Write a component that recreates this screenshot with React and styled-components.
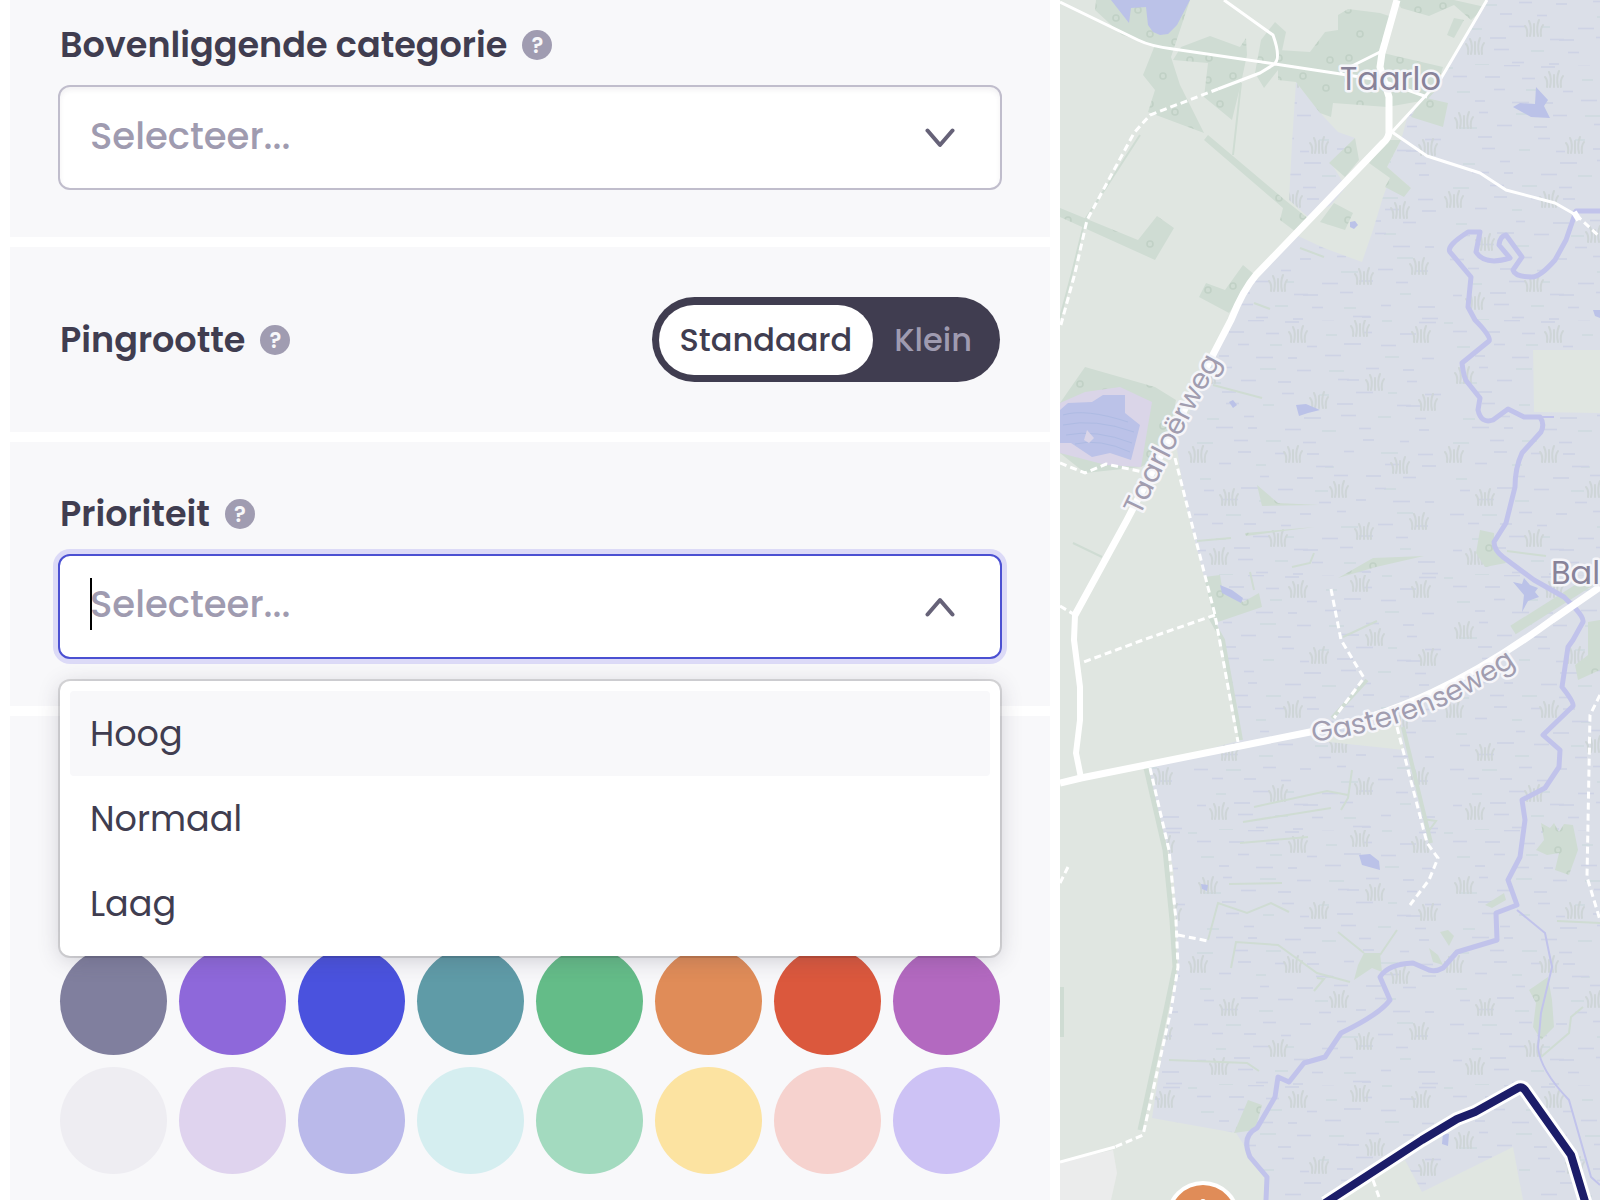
import React, { useState } from 'react';
import styled, { createGlobalStyle, css } from 'styled-components';

const darkColors = [
  ['Grijs', '#807f9e'],
  ['Paars', '#8e68da'],
  ['Blauw', '#4a52de'],
  ['Petrol', '#5f9ba7'],
  ['Groen', '#64bc88'],
  ['Oranje', '#e08c58'],
  ['Rood', '#db583d'],
  ['Magenta', '#b369c0'],
];

const lightColors = [
  ['Lichtgrijs', '#eeedf2'],
  ['Lichtpaars', '#dfd3ee'],
  ['Lichtblauw', '#bab9ea'],
  ['Lichtpetrol', '#d5eef0'],
  ['Lichtgroen', '#a3dabf'],
  ['Geel', '#fce3a1'],
  ['Roze', '#f6d2ce'],
  ['Lila', '#cdc2f5'],
];

const priorities = ['Hoog', 'Normaal', 'Laag'];

const Chevron = ({ up }) => (
  <ChevronSvg viewBox="0 0 30 20" aria-hidden="true">
    <path d={up ? 'M2.5 17.5 15 3 27.5 17.5' : 'M2.5 2.5 15 17 27.5 2.5'} />
  </ChevronSvg>
);

const Help = ({ topic }) => (
  <HelpButton type="button" aria-label={`Uitleg ${topic}`}>?</HelpButton>
);

const ParentCategory = () => (
  <Section $top={23}>
    <LabelRow>
      <Label htmlFor="parent">Bovenliggende categorie</Label>
      <Help topic="categorie" />
    </LabelRow>
    <Control>
      <Select id="parent" defaultValue="">
        <option value="">Selecteer...</option>
      </Select>
      <Chevron />
    </Control>
  </Section>
);

const PinSize = () => {
  const [size, setSize] = useState('Standaard');
  return (
    <ToggleSection>
      <ToggleLabel>
        <Title id="pin-size">Pingrootte</Title>
        <Help topic="pingrootte" />
      </ToggleLabel>
      <Toggle role="group" aria-labelledby="pin-size">
        {['Standaard', 'Klein'].map((name) => (
          <ToggleButton
            key={name}
            type="button"
            $active={size === name}
            aria-pressed={size === name}
            onClick={() => setSize(name)}
          >
            {name}
          </ToggleButton>
        ))}
      </Toggle>
    </ToggleSection>
  );
};

const Priority = () => {
  const [value, setValue] = useState('');
  return (
    <Section $top={50}>
      <LabelRow>
        <Label htmlFor="priority">Prioriteit</Label>
        <Help topic="prioriteit" />
      </LabelRow>
      <Control $focused>
        {!value && <Caret />}
        <ComboInput
          id="priority"
          role="combobox"
          aria-expanded="true"
          aria-controls="priority-menu"
          placeholder="Selecteer..."
          value={value}
          onChange={(e) => setValue(e.target.value)}
        />
        <Chevron up />
        <Menu id="priority-menu" role="listbox">
          {priorities.map((name, i) => (
            <Option
              key={name}
              role="option"
              aria-selected={value === name}
              $highlighted={i === 0}
              onClick={() => setValue(name)}
            >
              {name}
            </Option>
          ))}
        </Menu>
      </Control>
    </Section>
  );
};

const Colors = () => (
  <ColorSection>
    <Swatches>
      {[...darkColors, ...lightColors].map(([name, color]) => (
        <Swatch key={name} type="radio" name="color" aria-label={name} $color={color} />
      ))}
    </Swatches>
  </ColorSection>
);

// Reed clumps inside one 256px marsh tile
const reeds = [
  [110, 14], [172, 8], [233, 14], [187, 62], [131, 80], [240, 82],
  [20, 55], [10, 134], [105, 134], [212, 145], [151, 169], [41, 177],
  [90, 218], [176, 211], [231, 201], [31, 236],
];

const ripples = Array.from({ length: 132 }, (_, i) => {
  const row = Math.floor(i / 6);
  return {
    x: ((i % 6) * 43 + row * 31 + (i * 17) % 23) % 240,
    y: 3 + row * 12 - (i * 5) % 8 * 0.5,
    w: 9 + (i * 7) % 9,
    green: i % 4 === 0,
  };
});

const trees = [[8, 10], [33, 6], [56, 18], [20, 34], [45, 42], [9, 58], [60, 60]];

const woods = [
  '35,10 62,35 95,45 83,75 95,90 88,112 144,133 120,85 111,57 130,0 36,0',
  '150,36 180,47 186,38 187,55 181,83 172,120 144,97 148,63 113,60 121,47',
  '215,22 226,32 218,70 204,88 195,73 201,40',
  '218,50 250,52 265,32 278,30 278,15 288,9 320,13 332,17 323,53 383,67 376,90 367,100 327,107 273,103 271,117 260,113 236,82 218,80',
  '362,97 388,103 383,127 351,117',
  '337,0 394,0 425,7 411,20 394,5 369,16 341,8',
  '394,18 404,20 394,38 387,35',
  '148,135 225,200 250,220 236,232 220,220 223,208 144,140',
  '295,138 299,160 285,177 269,163',
  '341,140 327,167 351,188 344,197 325,187 330,178 309,163 327,140',
  '274,203 293,213 285,230 260,222',
  '0,208 78,240 97,216 114,228 95,260 0,217',
  '183,265 195,275 169,313 139,297 146,283 165,290',
  '25,367 95,387 116,400 106,453 81,467 25,473 0,453 0,403',
  '144,577 160,575 162,587 183,602 199,593 202,607 158,622 153,615',
  '420,530 434,533 434,543 446,563 425,567 416,553',
  '197,485 218,503 260,505 202,506',
  '185,533 255,527 186,536',
  '278,578 313,558 364,556 316,567',
  '304,953 320,953 322,972 312,968 294,980 298,965',
  '380,932 388,930 394,936 389,946',
  '369,948 378,955 383,965 373,962',
  '188,1100 202,1105 195,1130 174,1133',
  '481,823 490,828 494,823 499,832 504,824 513,825 518,850 509,875 495,870 499,853 487,855 476,850 484,840',
  '488,977 492,1000 494,1027 481,1040 473,1027 476,1003 469,990',
  '528,622 540,620 540,670 518,680 515,665 528,655',
  '425,905 444,893 446,900 432,908',
  '0,987 4,987 4,1037 0,1037',
];

const hedges = [
  'M181 83 173 155', 'M137 541 171 538', 'M153 385 202 398',
  'M194 807 267 791 288 795', 'M292 770 288 798 281 810',
  'M183 822 271 808', 'M180 843 248 837', 'M169 884 222 883',
  'M148 940 158 903 187 913 211 903 229 912',
  'M171 968 176 942 218 945 257 973 290 982', 'M257 978 264 979 254 991',
  'M278 932 304 953', 'M337 930 320 955', 'M109 1060 187 1063 199 1071',
  'M481 1057 509 1033 511 1017 523 1007', 'M240 248 264 257', 'M13 543 42 557',
  'M190 572 194 590', 'M232 567 250 563 254 553', 'M447 551 486 556',
  'M283 637 317 621', 'M194 303 210 309', 'M363 819 376 821 368 832', 'M497 921 540 923',
];

const riverPath =
  'M540 211H516L506 240 495 260Q480 277 472 277 455 277 453 270L462 257 446 235Q440 236 439 245L450 258Q425 266 416 252L420 232H408Q386 246 390 252L411 277 408 307 415 320Q432 337 429 341L402 363Q404 380 408 383L420 398 418 410Q421 424 433 420L448 409 464 417H480Q485 424 481 432L462 453Q455 468 455 487L446 523 434 542Q434 550 443 557L474 580 504 597 515 608Q524 618 523 622L513 640 508 647 502 687Q514 702 513 706L483 735 500 750 499 767 485 788 462 800 465 820 460 857 448 880 457 905 436 913 437 940 397 952 383 968Q376 972 369 970L353 963Q328 964 320 977L330 1000Q320 1014 281 1033L265 1057 244 1063 229 1082 218 1077 215 1097 197 1128Q181 1136 190 1157L207 1177 206 1200';

const RegionMap = () => (
  <MapSvg viewBox="0 0 540 1200" preserveAspectRatio="xMinYMin slice" role="img" aria-label="Kaart">
    <defs>
      <pattern id="marsh" x="128" y="320" width="256" height="255" patternUnits="userSpaceOnUse">
        <rect width="256" height="255" fill="#dbdfe8" />
        {ripples.map(({ x, y, w, green }, i) => (
          <path key={i} d={`M${x} ${y}h${w}`} stroke={green ? '#cfdbe0' : '#ced3e5'} strokeWidth="1.6" />
        ))}
        {reeds.map(([x, y]) => (
          <path
            key={`${x}-${y}`}
            transform={`translate(${x} ${y})`}
            d="M-7 8Q-6 1-9-2M-4 8Q-2-1-5-7M0 8V-4M4 8Q2-1 5-8M7 8Q6 1 9-3"
            fill="none"
            stroke="#ced5d7"
            strokeWidth="2"
            strokeLinecap="round"
          />
        ))}
      </pattern>
      <pattern id="wood" width="70" height="70" patternUnits="userSpaceOnUse">
        <rect width="70" height="70" fill="#cfdcd3" />
        {trees.map(([x, y]) => (
          <circle key={`${x}-${y}`} cx={x} cy={y} r="3" fill="none" stroke="#c1d1c6" strokeWidth="1.6" />
        ))}
      </pattern>
      <path id="taarloerweg" d="M80 516Q117 439 163 357" />
      <path id="gasterenseweg" d="M253 742C322 732 392 713 470 654" />
    </defs>

    <rect width="540" height="1200" fill="#e0e6e1" />
    <path
      fill="url(#marsh)"
      d="M427 0 380 80 367 97 348 115 341 140 327 167 351 188 330 178 323 197 313 230 302 262 264 248 236 235 190 287 171 320 155 353 116 443 125 500 134 537 144 577 155 617 162 640 172 693 181 740 86 767 102 827 113 867 116 920 118 967 102 1053 92 1118 176 1133 207 1180V1200H540V0ZM236 82 264 117 278 132 295 138 271 163 286 187 271 205 248 217 229 200 232 143Z"
    />
    <Land points="473,350 540,350 540,413 474,412" />
    <Land points="250,740 340,723 344,750" />
    <Land points="267,1200 345,1160 362,1192 453,1147 463,1200" />
    <polygon points="0,1162 53,1150 57,1173 51,1200 0,1200" fill="#ebecec" />

    {woods.map((points) => (
      <polygon key={points} points={points} fill="url(#wood)" />
    ))}
    <Hedge $width={2} d={hedges.join('')} />
    <Hedge $width={5} d="M86 768 105 850 112 920 115 967 106 1010 80 1130" />
    <Hedge $width={4} d="M150 617 163 640 181 740M343 727 371 843M307 680 272 718" />
    <Hedge $width={10} d="M453 630 540 575" />
    <Hedge $width={2} d="M80 135 25 220 12 273 0 318" />

    <polygon points="0,403 25,392 60,387 92,402 81,467 46,465 0,453" fill="#dad5e8" />
    <Water points="0,410 8,403 32,402 43,395 65,395 65,413 80,425 71,460 50,453 32,457 11,443 0,443" />
    <path
      d="M3 415Q25 408 68 422M3 425Q35 418 74 432M6 435Q36 429 72 443M15 444Q40 438 70 452"
      fill="none"
      stroke="#aebbe3"
    />
    <polygon points="27,430 34,438 29,443 24,440" fill="#dad5e8" />
    <Water points="51,0 69,23 71,8 86,7 88,25 93,32 100,35 108,34 117,25 130,0" />
    <Water points="453,107 460,103 475,104 476,87 488,100 484,106 490,118 471,117" />
    <Water points="160,585 172,590 183,598 181,603 162,593" />
    <Water points="236,405 246,404 260,410 248,413 239,416" />
    <Water points="453,582 462,584 464,578 470,585 478,588 475,592 479,597 468,601 462,612 464,595" />
    <Water points="299,855 310,854 319,861 320,870 302,865" />
    <Water points="169,402 173,400 177,405 173,408" />
    <Water points="290,222 295,221 298,225 294,229 290,227" />
    <Water points="141,884 148,885 147,891 142,889" />
    <Water points="383,1133 389,1134 388,1146 382,1144" />
    <Water points="533,310 540,310 540,318 535,316" />
    <River $width={5} d={riverPath} />
    <River $width={2} d="M480 417 494 417M457 910 485 933 492 967 481 1013 478 1047Q480 1070 509 1100L531 1177 540 1185" />

    <Road $width={3} d="M0 2 78 40Q90 46 113 49L215 64 320 80 367 97M164 0 213 35Q222 60 213 65L200 73 158 89M320 52 280 72M0 1162 55 1147" />
    <Road $width={3} d="M427 0 380 80 332 132 367 156 420 173 446 190 495 203 516 215" />
    <Road $width={7} d="M337 0 322 53 320 67 329 97V133Q328 139 323 143L196 275Q183 290 171 320L67 520 15 615" />
    <Road $width={6} d="M15 615 14 640 20 687 20 720 16 753 21 778" />
    <Road $width={7} d="M0 783 21 778 250 732C335 716 410 680 492 620L540 587" />
    <Road $width={6} d="M514 212 519 220" />
    <Track d="M158 89 90 115 74 133 27 220 15 273 0 328M516 215 540 237" />
    <Track d="M0 463 25 473 46 464 83 472M115 458 155 615 178 742M155 615 83 640 21 663M0 606 15 615" />
    <Track d="M271 589 281 640 304 678 274 718M337 727 367 843 378 858 369 880 350 905" />
    <Track d="M90 768 109 850 116 920 118 967 111 1010 83 1135 55 1147M118 935 148 941" />
    <Track d="M540 695 530 715 527 877 540 920M0 883 8 867M313 1180 320 1200" />

    <PlaceName x="280" y="90">Taarlo</PlaceName>
    <PlaceName x="491" y="584">Bal</PlaceName>
    <RoadName>
      <textPath href="#taarloerweg">Taarloërweg</textPath>
    </RoadName>
    <RoadName>
      <textPath href="#gasterenseweg">Gasterenseweg</textPath>
    </RoadName>

    <Route stroke="#fff" strokeWidth="14" d="M265 1203 362 1140 397 1119 415 1112 458 1088Q462 1086 465 1090L511 1155 527 1208" />
    <Route stroke="#1c1d69" strokeWidth="8" d="M265 1203 362 1140 397 1119 415 1112 458 1088Q462 1086 465 1090L511 1155 527 1208" />
    <circle cx="143" cy="1218" r="37" fill="#fff" />
    <circle cx="143" cy="1218" r="33" fill="#e08c58" />
    <circle cx="143" cy="1202" r="3" fill="#fff" />
  </MapSvg>
);

const App = () => (
  <>
    <GlobalStyle />
    <Page>
      <Sidebar>
        <ParentCategory />
        <PinSize />
        <Priority />
        <Colors />
      </Sidebar>
      <MapPane>
        <RegionMap />
      </MapPane>
    </Page>
  </>
);

const GlobalStyle = createGlobalStyle`
  * {
    box-sizing: border-box;
  }

  body {
    margin: 0;
    background: #fff;
    color: #403d50;
    font-family: Poppins, Inter, "Liberation Sans", sans-serif;
  }

  button,
  input,
  select {
    margin: 0;
    font-family: inherit;
  }
`;

const Page = styled.div`
  display: grid;
  grid-template-columns: minmax(0, 53fr) minmax(0, 27fr);
  min-height: 100vh;
`;

const Sidebar = styled.main`
  display: flex;
  flex-direction: column;
  gap: 10px;
  padding: 0 10px;
`;

const Section = styled.section`
  padding: ${({ $top }) => $top}px 48px 47px;
  background: #f8f8fa;
`;

const ToggleSection = styled.section`
  display: flex;
  align-items: center;
  justify-content: space-between;
  padding: 50px;
  background: #f8f8fa;
`;

const ColorSection = styled.section`
  flex: 1;
  padding: 232px 50px 26px;
  background: #f8f8fa;
`;

const LabelRow = styled.div`
  display: flex;
  align-items: center;
  gap: 15px;
  margin-bottom: 18px;
  padding: 0 2px;
`;

const ToggleLabel = styled.div`
  display: flex;
  align-items: center;
  gap: 15px;
`;

const labelText = css`
  font-size: 35px;
  font-weight: 600;
  line-height: 44px;
`;

const Label = styled.label`
  ${labelText}
`;

const Title = styled.span`
  ${labelText}
`;

const HelpButton = styled.button`
  width: 30px;
  height: 30px;
  padding: 1px 0 0;
  border: 0;
  border-radius: 50%;
  background: #a09cb1;
  color: #f8f8fa;
  font-size: 22px;
  font-weight: 600;
  line-height: 29px;
  text-align: center;
`;

const Control = styled.div`
  position: relative;
  display: flex;
  align-items: center;
  padding-right: 45px;
  border: 2px solid #c0bdcc;
  border-radius: 12px;
  background: #fff;
  box-shadow: inset 0 3px 5px rgba(64, 61, 80, 0.07);

  ${({ $focused }) => $focused && css`
    border-color: #4b50d2;
    box-shadow: 0 0 0 5px #dcdaf7;
  `}
`;

const field = css`
  flex: 1;
  min-width: 0;
  height: 101px;
  padding: 24px 0 30px 30px;
  border: 0;
  outline: 0;
  background: transparent;
  color: #9f9bb0;
  font-size: 37px;
  font-weight: 500;
  line-height: 47px;
`;

const Select = styled.select`
  ${field}
  padding-top: 26px;
  padding-bottom: 28px;
  appearance: none;
`;

const ComboInput = styled.input`
  ${field}

  &::placeholder {
    color: #9f9bb0;
    opacity: 1;
  }
`;

const Caret = styled.span`
  position: absolute;
  top: 22px;
  left: 30px;
  width: 2px;
  height: 52px;
  background: #000;
`;

const ChevronSvg = styled.svg`
  width: 30px;
  height: 20px;
  fill: none;
  stroke: #666278;
  stroke-width: 4;
  stroke-linecap: round;
  stroke-linejoin: round;
  pointer-events: none;
`;

const Menu = styled.ul`
  position: absolute;
  z-index: 1;
  top: calc(100% + 24px);
  left: 0;
  right: 0;
  margin: 0;
  padding: 10px;
  border-radius: 10px;
  background: #fff;
  box-shadow: 0 0 0 2px rgba(0, 0, 0, 0.12), 0 4px 22px rgba(64, 61, 80, 0.22);
  list-style: none;
`;

const Option = styled.li`
  padding: 20px;
  border-radius: 4px;
  background: ${({ $highlighted }) => ($highlighted ? '#f8f8fa' : 'transparent')};
  font-size: 35px;
  line-height: 45px;
  cursor: pointer;
`;

const Toggle = styled.div`
  display: flex;
  padding: 8px 7px 7px;
  border-radius: 43px;
  background: #403d50;
`;

const ToggleButton = styled.button`
  padding: 0 21px;
  border: 0;
  border-radius: 35px;
  background: ${({ $active }) => ($active ? '#fff' : 'transparent')};
  color: ${({ $active }) => ($active ? '#403d50' : '#9f9bb0')};
  font-size: 32px;
  font-weight: 500;
  line-height: 70px;
`;

const Swatches = styled.div`
  display: grid;
  grid-template-columns: repeat(8, minmax(0, 1fr));
  gap: 12px;
`;

const Swatch = styled.input`
  appearance: none;
  width: 100%;
  aspect-ratio: 1;
  border-radius: 50%;
  background: ${({ $color }) => $color};
`;

const MapPane = styled.aside`
  display: flex;
  min-width: 0;
`;

const MapSvg = styled.svg`
  display: block;
  width: 100%;
  height: 100%;
`;

const Land = styled.polygon`
  fill: #e0e6e1;
`;

const Water = styled.polygon`
  fill: #bbc2e8;
`;

const Hedge = styled.path`
  fill: none;
  stroke: #cfdcd3;
  stroke-width: ${({ $width }) => $width};
`;

const River = styled.path`
  fill: none;
  stroke: #c1c3eb;
  stroke-width: ${({ $width }) => $width};
  stroke-linejoin: round;
`;

const Road = styled.path`
  fill: none;
  stroke: #fff;
  stroke-width: ${({ $width }) => $width};
  stroke-linejoin: round;
`;

const Track = styled.path`
  fill: none;
  stroke: #fff;
  stroke-width: 3;
  stroke-dasharray: 7 4;
`;

const Route = styled.path`
  fill: none;
  stroke-linejoin: round;
`;

const PlaceName = styled.text`
  fill: #888399;
  stroke: #f5f5f9;
  stroke-width: 5;
  stroke-linejoin: round;
  paint-order: stroke;
  font-size: 32px;
  font-weight: 400;
`;

const RoadName = styled(PlaceName)`
  fill: #a19db0;
  font-size: 28px;
`;

export default App;
